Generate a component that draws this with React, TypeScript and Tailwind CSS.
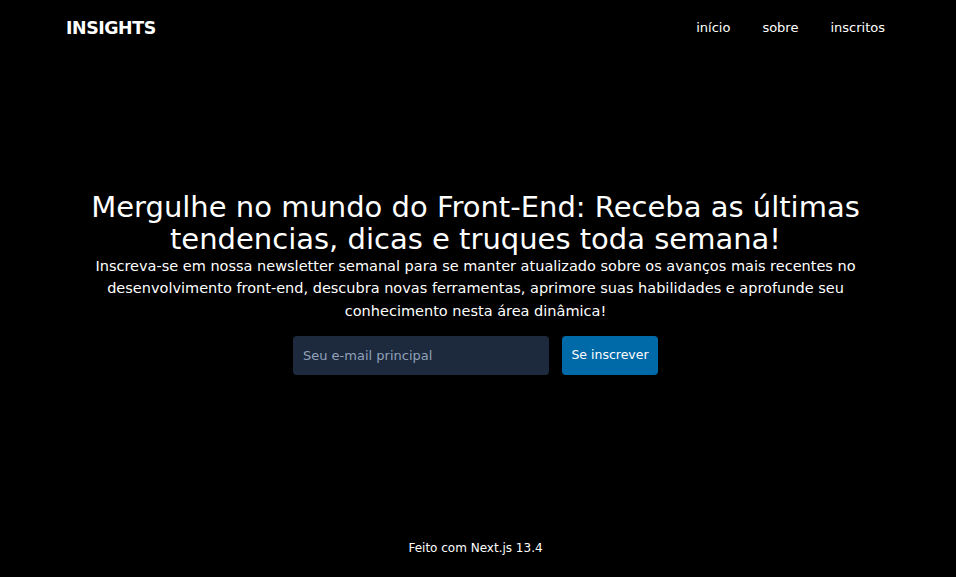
export default function App() {
  return (
    <div className="flex min-h-screen flex-col bg-black text-white font-['DejaVu_Sans',sans-serif]">
      <header className="flex items-center justify-between pl-[66px] pr-[71px] pt-[15px]">
        <h1 className="text-[17.4px] font-bold tracking-tight">INSIGHTS</h1>
        <nav className="flex gap-8 text-[13px]">
          <a href="#">início</a>
          <a href="#">sobre</a>
          <a href="#">inscritos</a>
        </nav>
      </header>

      <main className="flex flex-1 flex-col items-center justify-center pr-[5px] pt-[136px] text-center">
        <h2 className="text-[29px] leading-[32px]">
          Mergulhe no mundo do Front-End: Receba as últimas
          <br />
          tendencias, dicas e truques toda semana!
        </h2>
        <p className="max-w-[800px] text-[14.5px] leading-[22.5px]">
          Inscreva-se em nossa newsletter semanal para se manter atualizado sobre os avanços mais recentes no
          <br />
          desenvolvimento front-end, descubra novas ferramentas, aprimore suas habilidades e aprofunde seu
          <br />
          conhecimento nesta área dinâmica!
        </p>
        <form className="mt-[14px] flex gap-[13px]">
          <input
            type="email"
            placeholder="Seu e-mail principal"
            className="h-[39px] w-64 rounded bg-slate-800 px-[10px] text-[13px] text-white placeholder:text-slate-400 outline-none"
          />
          <button type="button" className="h-[39px] w-24 rounded bg-sky-700 text-[12.5px]">
            Se inscrever
          </button>
        </form>
      </main>

      <footer className="pb-[20px] pr-[5px] pt-[150px] text-center text-[12px]">Feito com Next.js 13.4</footer>
    </div>
  );
}
